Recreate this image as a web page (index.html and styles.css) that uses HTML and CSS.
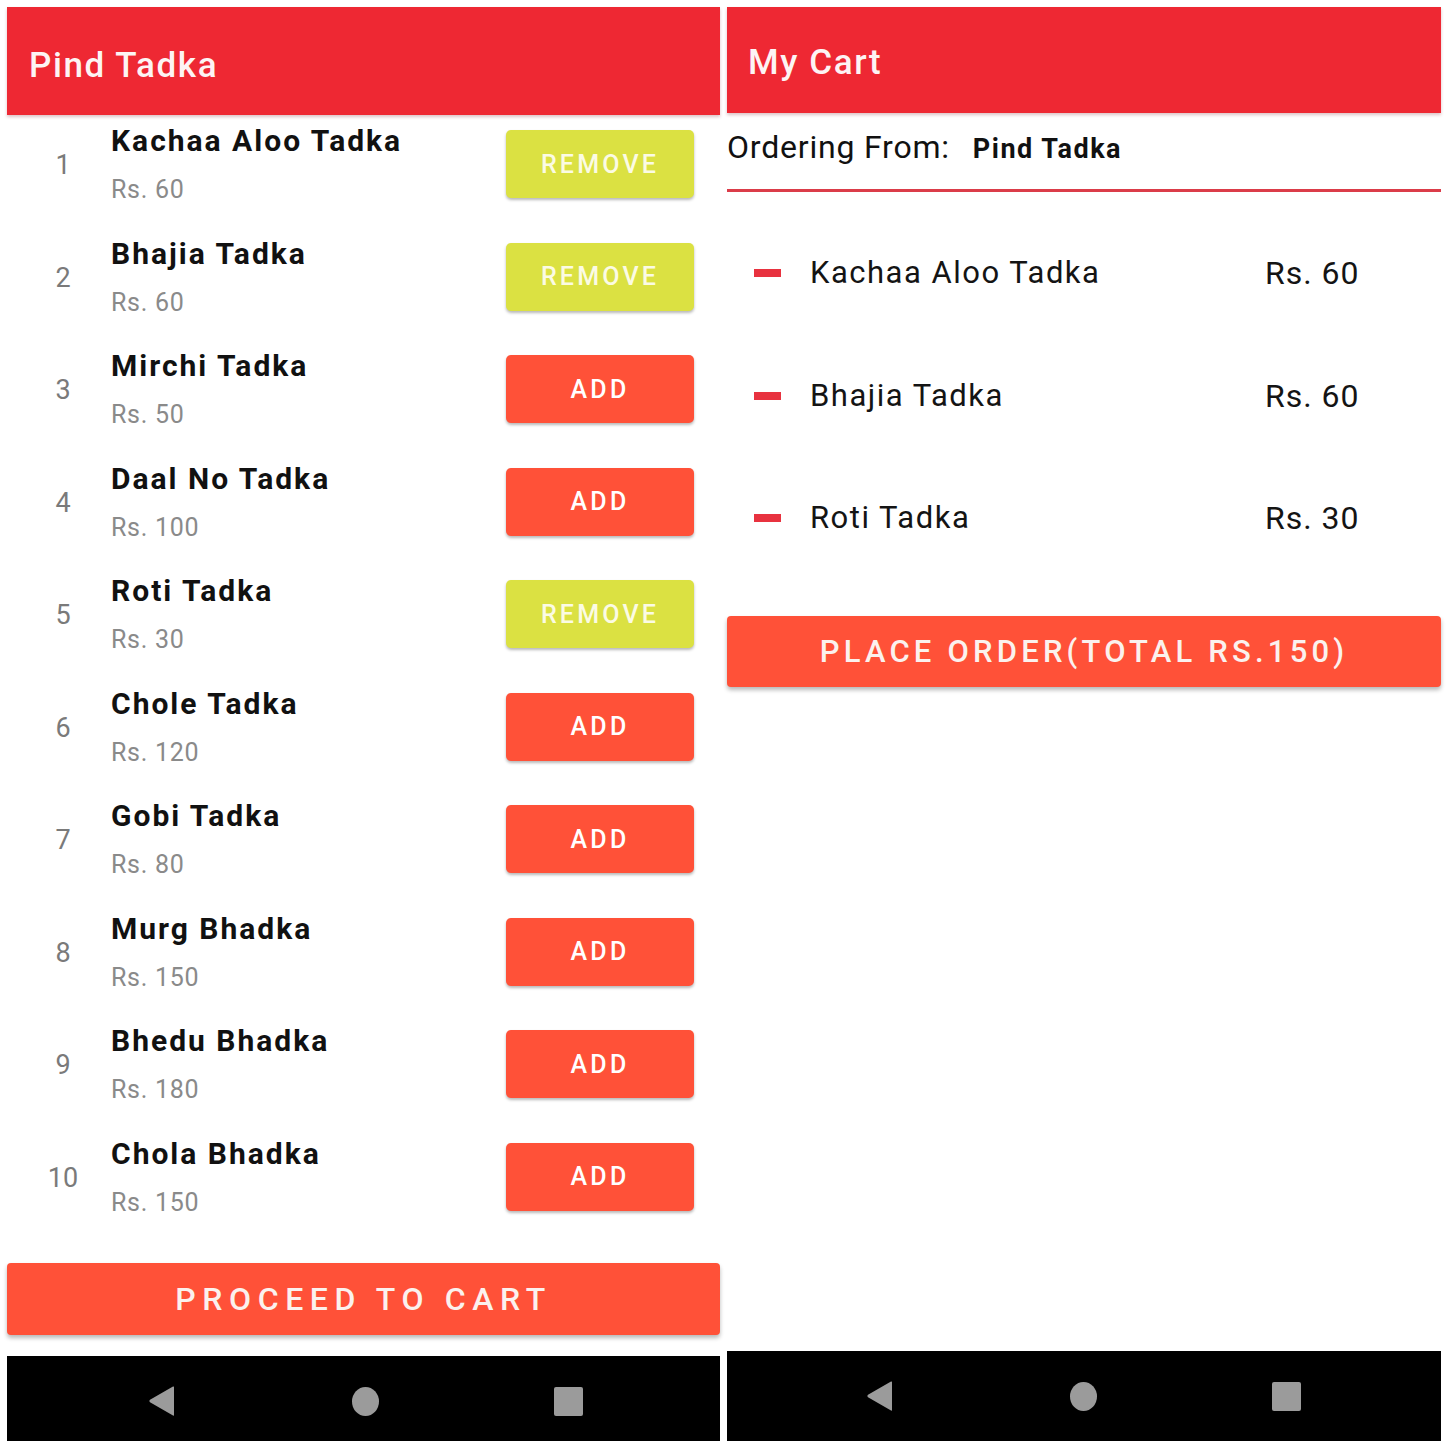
FILE: index.html
```html
<!DOCTYPE html>
<html>
<head>
<meta charset="utf-8">
<link rel="stylesheet" href="styles.css">
</head>
<body>
<div class="screens">
  <section class="phone phone-menu">
    <header class="appbar appbar-menu">Pind Tadka</header>
    <ul class="menu">
      <li class="menu-row"><span class="num">1</span><div class="info"><div class="name">Kachaa Aloo Tadka</div><div class="price">Rs. 60</div></div><button class="btn btn-remove">REMOVE</button></li>
      <li class="menu-row"><span class="num">2</span><div class="info"><div class="name">Bhajia Tadka</div><div class="price">Rs. 60</div></div><button class="btn btn-remove">REMOVE</button></li>
      <li class="menu-row"><span class="num">3</span><div class="info"><div class="name">Mirchi Tadka</div><div class="price">Rs. 50</div></div><button class="btn btn-add">ADD</button></li>
      <li class="menu-row"><span class="num">4</span><div class="info"><div class="name">Daal No Tadka</div><div class="price">Rs. 100</div></div><button class="btn btn-add">ADD</button></li>
      <li class="menu-row"><span class="num">5</span><div class="info"><div class="name">Roti Tadka</div><div class="price">Rs. 30</div></div><button class="btn btn-remove">REMOVE</button></li>
      <li class="menu-row"><span class="num">6</span><div class="info"><div class="name">Chole Tadka</div><div class="price">Rs. 120</div></div><button class="btn btn-add">ADD</button></li>
      <li class="menu-row"><span class="num">7</span><div class="info"><div class="name">Gobi Tadka</div><div class="price">Rs. 80</div></div><button class="btn btn-add">ADD</button></li>
      <li class="menu-row"><span class="num">8</span><div class="info"><div class="name">Murg Bhadka</div><div class="price">Rs. 150</div></div><button class="btn btn-add">ADD</button></li>
      <li class="menu-row"><span class="num">9</span><div class="info"><div class="name">Bhedu Bhadka</div><div class="price">Rs. 180</div></div><button class="btn btn-add">ADD</button></li>
      <li class="menu-row"><span class="num">10</span><div class="info"><div class="name">Chola Bhadka</div><div class="price">Rs. 150</div></div><button class="btn btn-add">ADD</button></li>
    </ul>
    <button class="wide-btn proceed">PROCEED TO CART</button>
    <nav class="navbar navbar-menu">
      <svg class="nav-back" width="27" height="30" viewBox="0 0 27 30"><path d="M26 1 L26 29 Q26 30 25 29.4 L2 16.2 Q0.5 15 2 13.8 L25 0.6 Q26 0 26 1 Z" fill="#9b9b9b"/></svg>
      <span class="nav-home"></span>
      <span class="nav-recent"></span>
    </nav>
  </section>

  <section class="phone phone-cart">
    <header class="appbar appbar-cart">My Cart</header>
    <div class="ordering"><span class="ordering-label">Ordering From:</span><span class="ordering-name">Pind Tadka</span></div>
    <div class="divider"></div>
    <ul class="cart">
      <li class="cart-row"><span class="minus"></span><span class="cart-name">Kachaa Aloo Tadka</span><span class="cart-price">Rs. 60</span></li>
      <li class="cart-row"><span class="minus"></span><span class="cart-name">Bhajia Tadka</span><span class="cart-price">Rs. 60</span></li>
      <li class="cart-row"><span class="minus"></span><span class="cart-name">Roti Tadka</span><span class="cart-price">Rs. 30</span></li>
    </ul>
    <button class="wide-btn place">PLACE ORDER(TOTAL RS.150)</button>
    <nav class="navbar navbar-cart">
      <svg class="nav-back" width="27" height="30" viewBox="0 0 27 30"><path d="M26 1 L26 29 Q26 30 25 29.4 L2 16.2 Q0.5 15 2 13.8 L25 0.6 Q26 0 26 1 Z" fill="#9b9b9b"/></svg>
      <span class="nav-home"></span>
      <span class="nav-recent"></span>
    </nav>
  </section>
</div>
</body>
</html>
```
FILE: styles.css
```css
* { box-sizing: border-box; }
html, body { margin: 0; padding: 0; background: #fff; }
body {
  font-family: Roboto, "Noto Sans", "Liberation Sans", sans-serif;
  width: 1448px;
  height: 1448px;
  padding: 7px;
  overflow: hidden;
}
.screens {
  display: flex;
  gap: 7px;
  height: 1434px;
}
.phone {
  display: flex;
  flex-direction: column;
  height: 1434px;
  background: #fff;
}
.phone-menu { width: 713px; }
.phone-cart { width: 714px; }

.appbar {
  background: #ee2833;
  color: #fdf4f4;
  font-size: 35px;
  font-weight: 500;
  line-height: 41px;
  letter-spacing: 1.6px;
  box-shadow: 0 2px 3px rgba(120, 20, 30, 0.25);
  position: relative;
  z-index: 1;
  flex: none;
}
.appbar-menu { height: 108px; padding: 38px 0 0 22px; }
.appbar-cart { height: 106px; padding: 35px 0 0 21px; }

/* menu list */
.menu { list-style: none; margin: 0; padding: 0; flex: none; }
.menu-row {
  display: flex;
  align-items: flex-start;
  height: 112.5px;
}
.num {
  width: 104px;
  padding-top: 34px;
  padding-left: 8px;
  text-align: center;
  font-size: 27px;
  line-height: 32px;
  color: #7a7a7a;
  flex: none;
}
.info { flex: 1; padding-top: 8px; }
.name {
  font-size: 30px;
  font-weight: 700;
  line-height: 35px;
  letter-spacing: 2px;
  color: #111;
}
.price {
  margin-top: 17px;
  font-size: 25px;
  line-height: 30px;
  letter-spacing: 0.7px;
  color: #8a8a8a;
}
.btn {
  flex: none;
  width: 188px;
  height: 68px;
  margin-top: 15px;
  margin-right: 26px;
  border: none;
  border-radius: 5px;
  color: #fff;
  font-family: Roboto, "Noto Sans", sans-serif;
  font-size: 25px;
  font-weight: 500;
  letter-spacing: 3.2px;
  box-shadow: 0 2px 3px rgba(0, 0, 0, 0.28);
}
.btn-remove { background: #dbe142; color: #fbfbe4; }
.btn-add { background: #ff5138; }

.wide-btn {
  flex: none;
  display: block;
  width: 100%;
  border: none;
  border-radius: 4px;
  background: #ff5138;
  color: #fbf1ee;
  font-family: Roboto, "Noto Sans", sans-serif;
  font-weight: 500;
  box-shadow: 0 3px 4px rgba(0, 0, 0, 0.28);
  padding: 0;
}
.proceed {
  height: 72px;
  margin-top: 23px;
  font-size: 32px;
  letter-spacing: 6.6px;
}
.place {
  height: 71px;
  margin-top: 36px;
  font-size: 31px;
  letter-spacing: 4.2px;
}

/* nav bar */
.navbar {
  flex: none;
  margin-top: auto;
  background: #000;
  display: flex;
  align-items: center;
}
.navbar-menu { height: 85px; padding: 5px 0 0 141px; }
.navbar-cart { height: 90px; padding: 0 0 0 139px; }
.nav-back { display: block; flex: none; }
.nav-home {
  display: block;
  width: 27px;
  height: 29px;
  border-radius: 50%;
  background: #9b9b9b;
  margin-left: 177px;
}
.nav-recent {
  display: block;
  width: 29px;
  height: 29px;
  border-radius: 2px;
  background: #9b9b9b;
  margin-left: 175px;
}

/* cart */
.ordering {
  margin-top: 15px;
  display: flex;
  align-items: baseline;
  line-height: 38px;
  color: #111;
}
.ordering-label { font-size: 32px; letter-spacing: 0.8px; }
.ordering-name { font-size: 27px; font-weight: 700; margin-left: 23px; letter-spacing: 1.5px; }
.divider {
  margin-top: 21px;
  height: 3px;
  background: #db3c49;
  flex: none;
}
.cart { list-style: none; margin: 0; padding: 20px 0 0 27px; flex: none; }
.cart-row {
  display: grid;
  grid-template-columns: 27px 426px auto;
  column-gap: 29px;
  align-items: center;
  height: 122.5px;
}
.minus {
  display: block;
  width: 27px;
  height: 8px;
  background: #e8323f;
}
.cart-name, .cart-price {
  font-size: 31px;
  line-height: 36px;
  letter-spacing: 1.5px;
  color: #141414;
}
.cart-price { font-size: 32px; letter-spacing: 1px; }
```
